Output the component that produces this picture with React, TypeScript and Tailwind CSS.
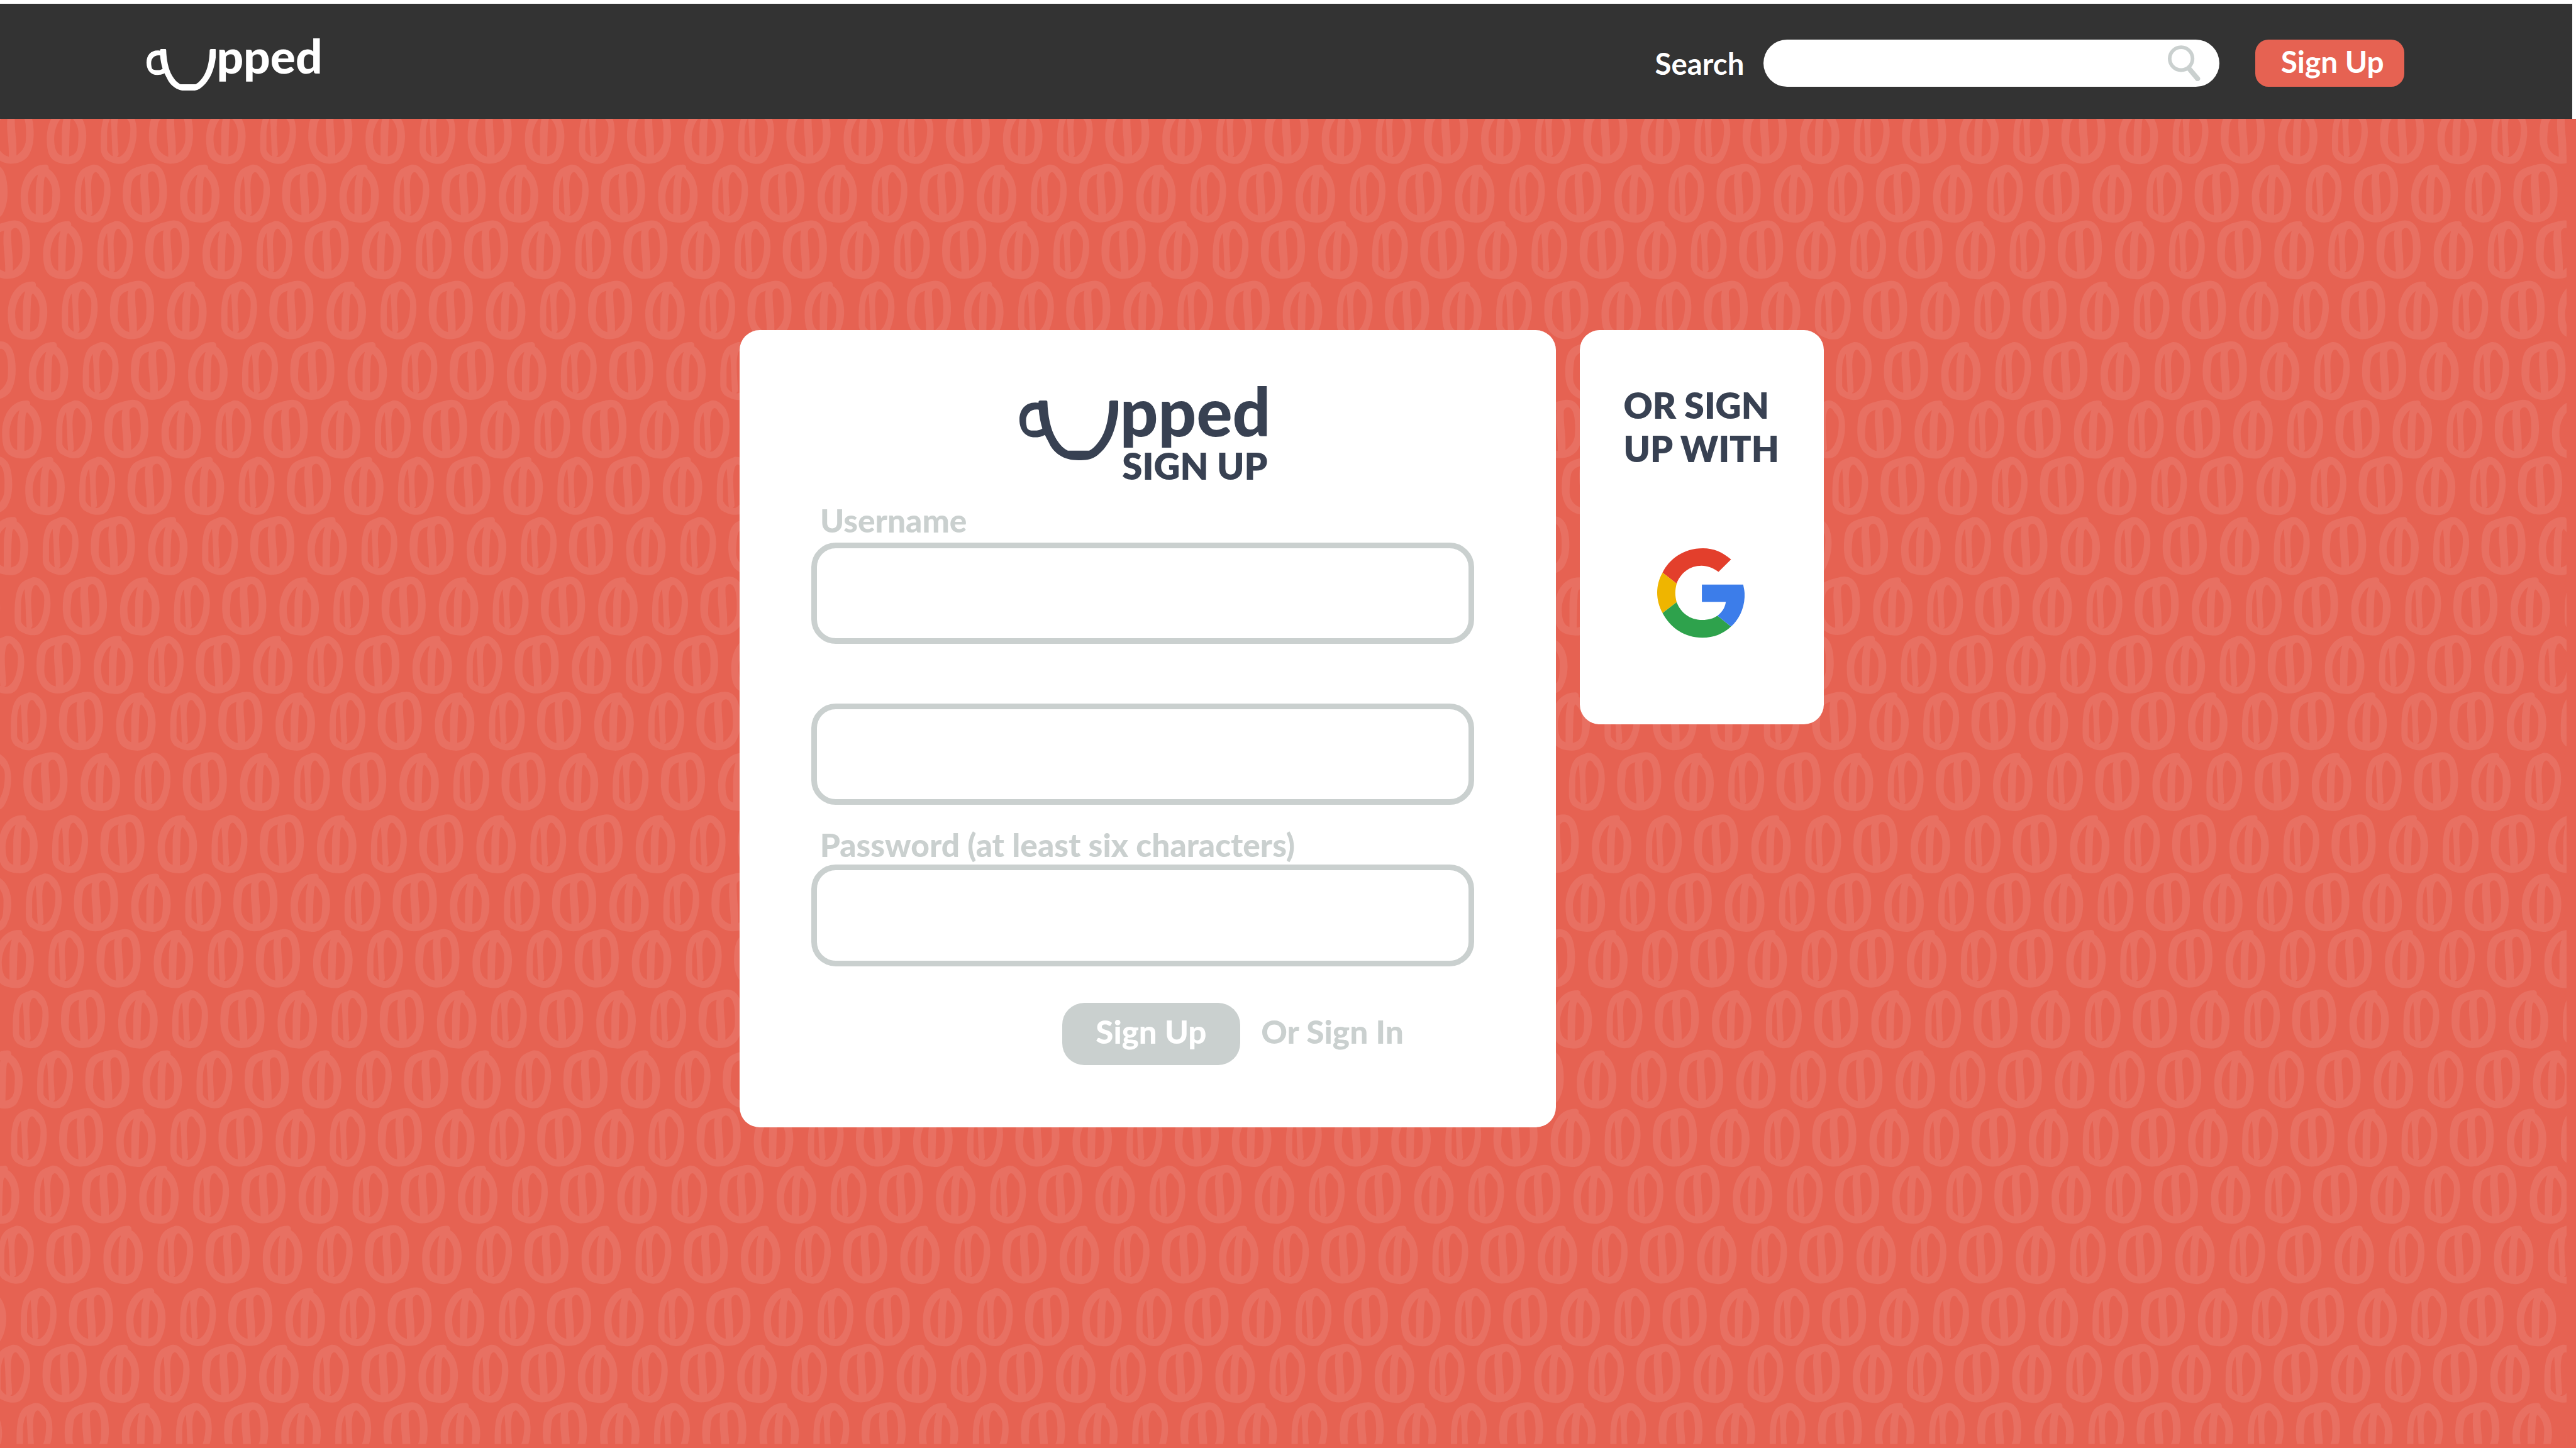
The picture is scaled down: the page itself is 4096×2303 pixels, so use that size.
type BeanRow = { left: number; bottom: number };

const ROW_PERIOD = 352.15;

const beanRows: BeanRow[] = [
  { left: 103.3, bottom: 363 },
  { left: 45.6, bottom: 492.5 },
  { left: 95.3, bottom: 617.5 },
  { left: 17.2, bottom: 750.9 },
  { left: 63.5, bottom: 884.8 },
  { left: 4.6, bottom: 1013.8 },
  { left: 55.8, bottom: 1138.6 },
  { left: -25, bottom: 1271.4 },
  { left: 265.2, bottom: 1404.7 },
  { left: 207.1, bottom: 1534 },
  { left: 256.7, bottom: 1659.2 },
  { left: 178.1, bottom: 1792.7 },
  { left: -4, bottom: 1930.3 },
  { left: 289.9, bottom: 2059.6 },
  { left: 339.7, bottom: 2184 },
  { left: 261.2, bottom: 2317.5 },
  { left: 314.9, bottom: 2450.3 },
  { left: 257, bottom: 2579.4 },
  { left: 307.5, bottom: 2705 },
  { left: 228.5, bottom: 2838 },
  { left: 278.6, bottom: 2975.8 },
  { left: 220.4, bottom: 3100.8 },
  { left: 269.4, bottom: 3229.5 },
];

const BEANS =
  "M17,240C19,120 80,24 185,27C198,29 206,40 203,56C250,85 279,150 279,228C279,270 270,320 253,352C240,390 210,413 158,413C100,410 62,395 42,365C22,335 17,290 17,240Z" +
  "M133,91C100,110 68,170 66,240C66,300 78,345 117,357L117,220C117,180 120,130 133,91Z" +
  "M184,107C174,108 172,130 171,160C168,200 168,240 165,361C195,355 215,340 222,300C226,270 227,240 227,205C227,165 205,125 184,107Z" +
  "M375,250C377,150 390,75 440,50C460,38 475,36 490,28C520,22 545,35 568,60C595,85 613,135 613,200C613,270 590,340 565,380C545,405 525,411 495,411C460,410 430,395 405,380C380,355 375,330 375,300Z" +
  "M441,105C425,130 417,170 417,215L417,318C422,335 438,352 455,360C451,330 450,290 447,210C446,170 442,130 441,105Z" +
  "M513,77C495,80 485,115 484,180C484,230 490,290 493,345C493,355 488,362 481,365C500,370 520,355 540,325C560,290 571,240 571,175C571,140 560,125 545,110C535,90 525,77 513,77Z" +
  "M694,225C695,150 705,100 735,72C765,45 820,35 855,25C905,15 935,30 958,65C978,100 987,150 987,210C987,270 975,320 950,360C920,395 880,410 835,410C790,408 755,390 730,360C700,315 694,270 694,225Z" +
  "M815,89C785,98 760,115 754,150C749,185 746,220 746,260C746,310 775,350 822,363C823,320 818,260 813,210C809,170 809,120 815,89Z" +
  "M890,72C875,72 862,85 861,102C861,150 865,200 870,250C873,290 873,330 873,355C905,335 925,305 933,270C936,250 936,220 936,190C936,130 920,72 890,72Z";

function BeanPattern() {
  return (
    <svg
      className="absolute inset-0 h-full w-full"
      viewBox="0 262.7 5692 2937.7"
      preserveAspectRatio="none"
      aria-hidden="true"
    >
      <defs>
        <path id="beans" d={BEANS} fillRule="evenodd" />
        <clipPath id="beans-area">
          <rect x="0" y="0" width="5671.3" height="3191.8" />
        </clipPath>
      </defs>
      <g clipPath="url(#beans-area)" fill="#e87062">
        {beanRows.map((row) =>
          Array.from({ length: 19 }, (_, i) => (
            <use
              key={`${row.bottom}-${i}`}
              href="#beans"
              transform={`translate(${row.left - 5.67 + (i - 1) * ROW_PERIOD} ${row.bottom - 137.67}) scale(0.33333)`}
            />
          )),
        )}
      </g>
    </svg>
  );
}

function Cup({ className }: { className: string }) {
  return (
    <svg className={className} viewBox="126 195 529 396" preserveAspectRatio="none" aria-hidden="true">
      <path
        fill="currentColor"
        fillRule="evenodd"
        d="M228,211C226,203 230,195 237,195L267,195C273,195 275,199 275,205C277,290 290,385 322,450C343,492 363,515 384,527L498,527C520,515 545,480 565,437C590,380 604,300 605,207C605,199 609,195 617,195L644,195C651,195 655,201 655,209C653,290 638,380 615,440C592,500 560,545 530,568C505,587 480,591 440,591C400,591 370,582 340,558C315,537 300,515 289,490C280,465 270,445 262,423C245,435 228,439 207,439C160,439 126,395 126,322C126,255 160,208 210,209C217,209 222,210 228,211ZM229,256C190,248 161,280 161,328C161,345 164,365 167,378C172,390 183,394 200,394C220,395 238,391 248,380C238,340 232,300 229,256Z"
      />
    </svg>
  );
}

function GoogleIcon() {
  return (
    <svg
      className="ml-[122.1px] mt-[125px] h-[142.3px] w-[139.1px]"
      viewBox="534 873 489 337"
      preserveAspectRatio="none"
      aria-label="Google"
    >
      <path fill="#e33f2c" d="M564,965C600,915 680,873 790,873C850,873 900,888 947,915L877,962C845,947 815,939 782,939C715,939 665,967 643,1006Z" />
      <path fill="#efb500" d="M564,965L643,1006C633,1030 633,1053 643,1076L564,1117C524,1068 524,1012 564,965Z" />
      <path fill="#2ea24c" d="M564,1117L643,1076C665,1115 715,1143 787,1143C820,1143 848,1138 871,1127L947,1168C905,1195 850,1210 787,1210C690,1210 610,1175 564,1117Z" />
      <path fill="#3c7dea" d="M784,1010H1015C1018,1022 1023,1034 1023,1048C1023,1100 990,1142 947,1168L871,1127C895,1115 913,1098 918,1075H784Z" />
    </svg>
  );
}

function SearchIcon() {
  return (
    <svg className="h-[58px] w-[54px]" viewBox="0 0 54 58" fill="none" stroke="#cad0cf" aria-hidden="true">
      <circle cx="22.1" cy="22.3" r="18.2" strokeWidth="5.8" />
      <path d="M35.5 39L48.3 54.2" strokeWidth="8" strokeLinecap="round" />
    </svg>
  );
}

function Header() {
  return (
    <header className="mt-[6px] flex h-[183px] w-[4090px] items-start bg-[#333333] pl-[232.5px] text-white">
      <div className="mt-[45.3px] flex items-start">
        <Cup className="mt-[26.4px] h-[66.8px] w-[110.9px]" />
        <span className="ml-[1px] text-[74.8px] leading-none font-black">pped</span>
      </div>
      <label className="mt-[71px] mr-[30.2px] ml-auto text-[47.4px] leading-none font-bold">Search</label>
      <div className="mt-[57px] flex h-[75.3px] w-[725.7px] items-start justify-end rounded-full bg-white pt-[8px] pr-[29px]">
        <SearchIcon />
      </div>
      <button className="mt-[57px] mr-[267px] ml-[56.6px] flex h-[75.3px] w-[237.1px] items-start rounded-[21px] bg-[#e66252] pt-[11.4px] pl-[40.8px] text-[47.8px] leading-none font-bold">
        Sign Up
      </button>
    </header>
  );
}

function SignUpCard() {
  const field = "block h-[161.5px] w-[1054.9px] rounded-[39px] border-[9px] border-[#cad0cf] bg-white";
  return (
    <section className="flex h-[1268.7px] w-[1298.3px] flex-col rounded-[32px] bg-white pl-[114px] text-[51.45px] leading-none text-[#cad0cf]">
      <div className="mt-[75.4px] ml-[331.2px] flex h-[106.5px] items-start text-[#384152]">
        <Cup className="mt-[37px] h-[95px] w-[157.8px]" />
        <span className="ml-[2.3px] text-[106.5px] font-black">pped</span>
      </div>
      <h1 className="mt-[5.8px] ml-[494.8px] text-[58.1px] font-extrabold text-[#384152]">SIGN UP</h1>
      <label className="mt-[31.7px] ml-[14.4px] font-black">Username</label>
      <div className={`mt-[9.2px] ${field}`} />
      <div className={`mt-[94.7px] ${field}`} />
      <label className="mt-[37.9px] ml-[14.2px] font-black">Password (at least six characters)</label>
      <div className={`mt-[5.5px] ${field}`} />
      <div className="mt-[58.4px] ml-[399.6px] flex items-start font-black">
        <button className="flex h-[98.8px] w-[282.7px] items-start rounded-[35px] bg-[#cad0cf] pt-[20px] pl-[53.2px] text-[51.1px] leading-none text-white">
          Sign Up
        </button>
        <a className="mt-[19.9px] ml-[33.5px]">Or Sign In</a>
      </div>
    </section>
  );
}

function GoogleCard() {
  return (
    <section className="h-[627.5px] w-[387.3px] rounded-[31.5px] bg-white pt-[85.6px] text-[#384152]">
      <h2 className="ml-[69px] text-[56.9px] leading-[68.6px] font-extrabold whitespace-nowrap">
        OR SIGN
        <br />
        UP WITH
      </h2>
      <GoogleIcon />
    </section>
  );
}

export default function App() {
  return (
    <div className="flex h-[2303px] w-[4096px] flex-col overflow-hidden bg-white font-['Lato',sans-serif]">
      <Header />
      <main className="relative flex-1 bg-[#e66252]">
        <BeanPattern />
        <div className="relative flex items-start gap-[38.7px] pt-[335.5px] pl-[1175.5px]">
          <SignUpCard />
          <GoogleCard />
        </div>
      </main>
    </div>
  );
}
